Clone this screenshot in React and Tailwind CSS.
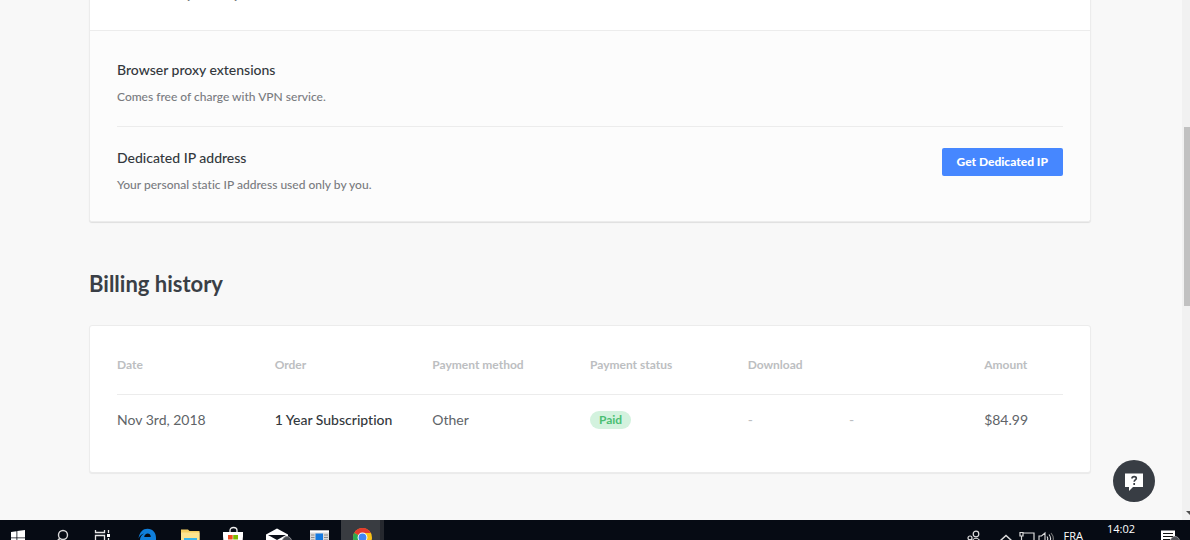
import React from 'react';

const addons = [
  {
    title: 'Browser proxy extensions',
    text: 'Comes free of charge with VPN service.',
  },
  {
    title: 'Dedicated IP address',
    text: 'Your personal static IP address used only by you.',
    action: 'Get Dedicated IP',
  },
];

const payments = [
  { date: 'Nov 3rd, 2018', order: '1 Year Subscription', method: 'Other', status: 'Paid', amount: '$84.99' },
];

const Icon = ({ children }) => (
  <svg width="24" height="24" viewBox="0 0 24 24" fill="none" className="overflow-visible" aria-hidden="true">
    {children}
  </svg>
);

const pinned = [
  {
    name: 'Search',
    icon: (
      <Icon>
        <circle cx="13" cy="7" r="4.5" stroke="#d8d8d8" strokeWidth="1.4" />
        <path d="M9.8 10.4L5.5 15" stroke="#d8d8d8" strokeWidth="1.6" />
      </Icon>
    ),
  },
  {
    name: 'Task view',
    icon: (
      <Icon>
        <path d="M2.500 2v2.500h9V2M2.500 18v-2.500h9V18M2.500 7.500h9v6h-9zM15.500 2v3M15.500 10v8" stroke="#e6e6e6" strokeWidth="1.3" />
        <path d="M14 6h3v3h-3z" fill="#fff" />
      </Icon>
    ),
  },
  {
    name: 'Edge',
    icon: (
      <Icon>
        <path d="M2.500 10.5C3.500 4 7 .8 11.500.8c5.300 0 8.500 4 8.500 9.200v2H8c0 4 5.500 6 11 3v4c-7 3.500-15 .5-15-7 0-3 1.500-5 4-6.500-3 .8-4.500 2.700-5.500 5zM8.200 9h6.600c0-5-6.300-4.500-6.600 0z" fill="#0f7fdc" />
      </Icon>
    ),
  },
  {
    name: 'File Explorer',
    icon: (
      <Icon>
        <path d="M2 1.500h7l1.500 1.500H20.500v16H2z" fill="#f5cf62" />
        <path d="M2 4.500h18.500V19H2z" fill="#fde48f" />
        <path d="M5 10h13v9H5z" fill="#38b6ec" />
      </Icon>
    ),
  },
  {
    name: 'Store',
    icon: (
      <Icon>
        <path d="M8 4.500V2.500C8 .5 9.500-.5 11.500-.5S15 .5 15 2.500v2" stroke="#eee" strokeWidth="1.300" />
        <path d="M1 4h20v4l-1 12H2L1 8z" fill="#fff" />
        <path d="M6 7h4.700v4.500H6z" fill="#f04e23" />
        <path d="M11.200 7H16v4.500h-4.800z" fill="#7fba00" />
        <path d="M6 12h4.700v4.500H6z" fill="#00a4ef" />
        <path d="M11.200 12H16v4.500h-4.800z" fill="#ffb900" />
      </Icon>
    ),
  },
  {
    name: 'Mail',
    icon: (
      <Icon>
        <path d="M1 6.500L12 .5l11 6V19H1z" fill="#fff" />
        <path d="M3 7h18l-9 5z" fill="#0a0e17" />
        <circle cx="22" cy="13" r="4.500" fill="#4b4e55" stroke="#8a8c90" />
      </Icon>
    ),
  },
  {
    name: 'News',
    icon: (
      <Icon>
        <path d="M2 2.500h19v17H2z" fill="#d9d9d9" />
        <path d="M2 2.500h19v2H2z" fill="#fff" />
        <path d="M7.500 5.500H15V16H7.500z" fill="#1379e0" />
        <path d="M3 7h3.500M3 9.500h3.500M3 12h3.500M16 7h4M16 9.500h4M16 12h4" stroke="#777" strokeWidth=".8" />
      </Icon>
    ),
  },
  {
    name: 'Chrome',
    active: true,
    icon: (
      <Icon>
        <circle cx="11.500" cy="9.500" r="9.500" fill="#fbc116" />
        <path d="M11.500 9.500L3.300 4.700A9.500 9.500 0 0 0 10.500 19L15 11.500z" fill="#2da94f" />
        <path d="M11.500 9.500L3.300 4.700A9.500 9.500 0 0 1 19.800 5H11.500z" fill="#e33b2e" />
        <circle cx="11.500" cy="9.500" r="4.900" fill="#fff" />
        <circle cx="11.500" cy="9.500" r="3.900" fill="#4285f4" />
      </Icon>
    ),
  },
];

const Taskbar = () => (
  <footer className="h-5 shrink-0 overflow-hidden bg-[#060b14] text-white font-['Open_Sans',sans-serif]">
    <div className="flex h-10 justify-between">
      <nav className="flex" aria-label="Taskbar">
        <button aria-label="Start" className="mr-1 flex w-9 items-center justify-center">
          <Icon>
            <path d="M5 4l5.500-.8v6.300H5zM11.300 3L19 2v7.500h-7.700zM5 10.300h5.500v6.300L5 15.800zM11.300 10.300H19v7.500l-7.700-1z" fill="#fff" />
          </Icon>
        </button>
        {pinned.map((app) => (
          <button
            key={app.name}
            aria-label={app.name}
            className={`flex w-[43px] items-center justify-center ${
              app.active ? 'border-r-4 border-[#25282e] bg-[#393c41] pl-1' : ''
            }`}
          >
            {app.icon}
          </button>
        ))}
      </nav>

      <div className="flex items-start">
        <div className="flex pt-2">
          <Icon>
            <circle cx="14" cy="6" r="2.800" stroke="#ddd" strokeWidth="1.200" />
            <circle cx="8" cy="10" r="2" stroke="#ddd" strokeWidth="1.200" />
            <path d="M9.500 17c0-9 9-9 9 0M4.500 17c0-6 4-6 5-4" stroke="#ddd" strokeWidth="1.200" />
          </Icon>
        </div>
        <div className="flex pt-2 pl-2">
          <Icon>
            <path d="M6.500 12.500L12 7.500l5.500 5" stroke="#ddd" strokeWidth="1.500" />
          </Icon>
        </div>
        <div className="-ml-1 flex pt-2">
          <Icon>
            <path d="M9 5h11v9H10M6 4.500h3v3.500H6zM7.500 8v7" stroke="#ddd" strokeWidth="1.200" />
          </Icon>
        </div>
        <div className="-ml-1 flex pt-2">
          <Icon>
            <path d="M5 8h2.500l3.500-3v11l-3.500-3H5z" stroke="#ddd" strokeWidth="1.100" />
            <path d="M13 8.500c1 1.500 1 3 0 4.500M15 6.500c2 2.500 2 5.500 0 8" stroke="#ddd" strokeWidth="1.100" />
            <path d="M17 5c3 3.500 3 7.500 0 11" stroke="#777" strokeWidth="1.100" />
          </Icon>
        </div>
        <span className="pt-2 pl-1.5 text-[11px] leading-4">FRA</span>
        <time className="pt-px pl-6 text-[11px] leading-4">14:02</time>
        <button aria-label="Notifications" className="flex pt-2 pr-2.5 pl-[21px]">
          <Icon>
            <path d="M5 2.500h14v13h-4v4l-4-4H5z" fill="#fff" />
            <path d="M7 5.500h10M7 8.500h10M7 11.500h7" stroke="#111" strokeWidth="1.100" />
            <circle cx="19" cy="13" r="4.500" fill="#4b4e55" stroke="#8a8c90" />
          </Icon>
        </button>
      </div>
    </div>
  </footer>
);

const App = () => {
  return (
    <div className="flex h-screen flex-col overflow-hidden bg-[#f8f8f8] font-['Lato',sans-serif] text-[#33383c] [font-variant-ligatures:none]">
      <div className="relative flex min-h-0 flex-1">
        <main className="min-w-0 flex-1 overflow-hidden pr-[91px] pl-[89px]">
          {/* SUBSCRIPTION */}
          <section className="rounded-b-[3px] border border-t-0 border-[#ececec] bg-white shadow-[0_1px_1px_rgba(0,0,0,0.1)]">
            <p className="-mt-4 px-[27px] pb-[26px] text-[13px] leading-5 font-bold text-[#797b80]">
              Your subscription expires on Nov 3rd
            </p>
            <div className="rounded-b-[3px] border-t border-[#ececec] bg-[#fcfcfc] px-[27px] pt-2 pb-[7px]">
              <ul className="divide-y divide-[#ececec]">
                {addons.map((addon) => (
                  <li key={addon.title} className="flex items-start justify-between pt-[21px] pb-5">
                    <div>
                      <h3 className="text-[14px] leading-5 font-medium">{addon.title}</h3>
                      <p className="mt-2 text-[12px] leading-[18px] font-medium text-[#797b80]">{addon.text}</p>
                    </div>
                    {addon.action && (
                      <button className="h-7 rounded-xs bg-[#4687ff] px-[15px] text-[12px] font-black text-white">
                        {addon.action}
                      </button>
                    )}
                  </li>
                ))}
              </ul>
            </div>
          </section>

          {/* BILLING HISTORY */}
          <h2 className="mt-12 text-[22px] leading-7 font-bold text-[#3a3f46]">Billing history</h2>
          <section className="mt-[27px] rounded-[3px] border border-[#ececec] bg-white px-[27px] pt-5 pb-[27px] shadow-[0_1px_1px_rgba(0,0,0,0.06)]">
            <table className="w-full table-fixed text-left">
              <thead>
                <tr className="border-b border-[#ececec] text-[12px] leading-4 text-[#bcbec1]">
                  <th className="w-1/6 pt-[11px] pb-[21px] font-bold">Date</th>
                  <th className="w-1/6 pt-[11px] pb-[21px] font-bold">Order</th>
                  <th className="w-1/6 pt-[11px] pb-[21px] font-bold">Payment method</th>
                  <th className="w-1/6 pt-[11px] pb-[21px] font-bold">Payment status</th>
                  <th className="w-1/4 pt-[11px] pb-[21px] font-bold">Download</th>
                  <th className="w-1/12 pt-[11px] pb-[21px] font-bold">Amount</th>
                </tr>
              </thead>
              <tbody>
                {payments.map((payment) => (
                  <tr key={payment.date} className="text-[14px] leading-5 text-[#606468]">
                    <td className="py-[15px]">{payment.date}</td>
                    <td className="py-[15px] font-medium text-[#33383c]">{payment.order}</td>
                    <td className="py-[15px]">{payment.method}</td>
                    <td className="py-[15px]">
                      <span className="block w-fit rounded-full bg-[#d3f2de] px-[9px] text-[12px] leading-[18px] font-bold text-[#4bbf73]">
                        {payment.status}
                      </span>
                    </td>
                    <td className="py-[15px] text-[#bcbec1]">
                      <div className="grid grid-cols-[3fr_4fr]">
                        <span>-</span>
                        <span>-</span>
                      </div>
                    </td>
                    <td className="py-[15px]">{payment.amount}</td>
                  </tr>
                ))}
              </tbody>
            </table>
          </section>
        </main>

        {/* SCROLLBAR */}
        <div className="flex w-2 shrink-0 flex-col overflow-hidden bg-[#f1f1f1] pt-[127px] pl-0.5">
          <div className="h-[179px] bg-[#c1c1c1]"></div>
          <svg width="8" height="5" viewBox="0 0 8 5" className="mt-auto mb-1 ml-0.5 shrink-0" aria-hidden="true">
            <path d="M0 0h8L4 4z" fill="#505050" />
          </svg>
        </div>

        <button
          aria-label="Help"
          className="absolute right-[35px] bottom-[18px] flex size-[42px] items-center justify-center rounded-full bg-[#383d44]"
        >
          <svg width="20" height="20" viewBox="0 0 20 20" aria-hidden="true">
            <path d="M1 2.500h18v13.500h-10l-4 4V16H1z" fill="#fff" />
            <path d="M8 7.500C8 5 12.300 5 12.300 7.300c0 1.700-2.100 1.600-2.100 3.500M10.200 12v1.900" fill="none" stroke="#383d44" strokeWidth="1.700" />
          </svg>
        </button>
      </div>

      <Taskbar />
    </div>
  );
};

export default App;
